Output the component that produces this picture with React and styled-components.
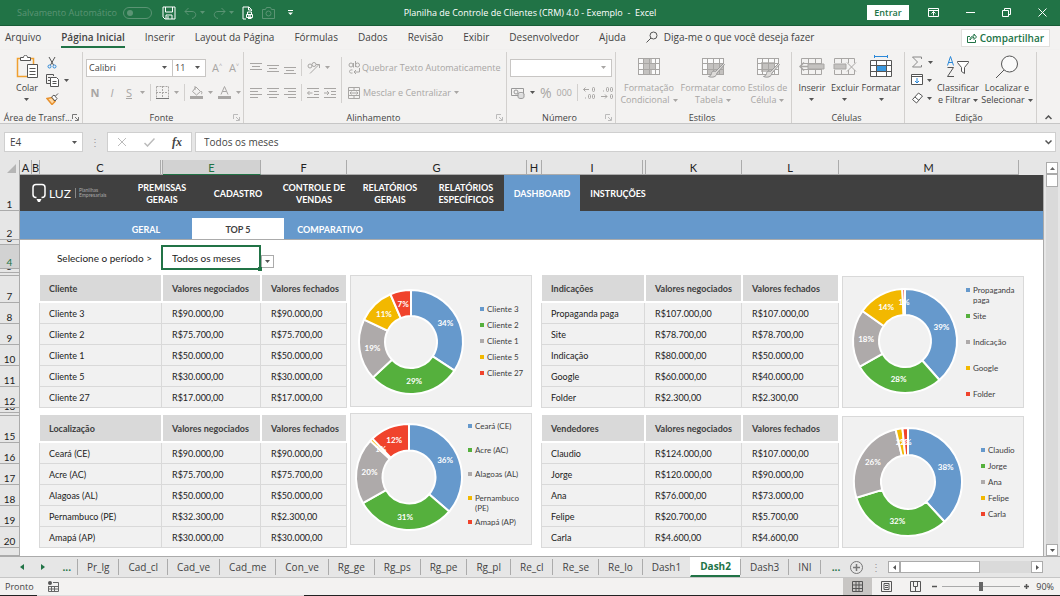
import React, { useState } from "react";
import styled, { createGlobalStyle } from "styled-components";

const UI_FONT = `"Open Sans", "Noto Sans", sans-serif`;
const CELL_FONT = `Lato, "Open Sans", sans-serif`;
const GREEN = "#217346";
const BLUE = "#6699cc";
const COLORS = ["#6699cc", "#55b03d", "#aeaaaa", "#f2b800", "#f0432c"];

const GlobalStyle = createGlobalStyle`
  * {
    box-sizing: border-box;
  }
  body {
    margin: 0;
    background: #f3f2f1;
    font-family: ${UI_FONT};
    font-size: 10px;
    color: #444;
    overflow: hidden;
  }
  button, input, select {
    font-family: inherit;
    font-size: inherit;
    color: inherit;
    margin: 0;
    padding: 0;
    border: none;
    background: none;
    border-radius: 0;
    outline: none;
  }
`;

const Svg = styled.svg`
  display: block;
  flex: none;
  fill: none;
  stroke: ${(p) => p.$color || "#555"};
  stroke-width: 1;
`;
const Icon = ({ w = 14, h = 14, color, children }) => (
  <Svg width={w} height={h} viewBox={`0 0 ${w} ${h}`} $color={color} aria-hidden="true">
    {children}
  </Svg>
);
const Caret = ({ color = "#555" }) => (
  <Icon w={5} h={3} color="none">
    <path d="M0 0h5L2.500 3z" fill={color} />
  </Icon>
);

/* ---------- title bar ---------- */
const TitleBar = styled.header`
  display: grid;
  grid-template-columns: 1fr auto 1fr;
  align-items: center;
  height: 26px;
  background: ${GREEN};
  border-bottom: 1px solid #185c37;
  color: #fff;
`;
const QuickAccess = styled.div`
  display: flex;
  align-items: center;
  gap: 8px;
  padding-left: 17px;
`;
const AutoSave = styled.label`
  display: flex;
  align-items: center;
  gap: 6px;
  margin-right: 2px;
  color: #5b9474;
  font-size: 9px;
`;
const Toggle = styled.input`
  appearance: none;
  display: flex;
  align-items: center;
  width: 29px;
  height: 12px;
  padding-left: 3px;
  border: 1px solid #5b9474;
  border-radius: 6px;
  &::before {
    content: "";
    width: 6px;
    height: 6px;
    border-radius: 50%;
    background: #5b9474;
  }
`;
const BareButton = styled.button`
  display: flex;
  align-items: center;
  justify-content: center;
  gap: ${(p) => p.$gap || 4}px;
`;
const Title = styled.h1`
  margin: 0;
  font-size: 9px;
  font-weight: 500;
  white-space: pre;
`;
const WindowControls = styled.div`
  display: flex;
  align-items: center;
  justify-content: flex-end;
  gap: 27px;
  padding-right: 13px;
`;
const SignIn = styled.button`
  width: 42px;
  height: 15px;
  margin-right: -8px;
  background: #fff;
  color: ${GREEN};
  font-size: 9px;
  font-weight: 600;
`;

/* ---------- ribbon ---------- */
const TabRow = styled.nav`
  display: flex;
  align-items: flex-end;
  height: 24px;
  padding: 0 10px 2px 5px;
  gap: 20px;
  background: #f3f2f1;
`;
const RibbonTab = styled.button`
  height: 20px;
  border-bottom: 2px solid ${(p) => (p.$active ? GREEN : "transparent")};
  font-weight: ${(p) => (p.$active ? 600 : 400)};
  white-space: nowrap;
`;
const TellMe = styled.button`
  display: flex;
  align-items: center;
  gap: 6px;
  flex: 1;
  height: 18px;
  margin-bottom: 2px;
`;
const Share = styled.button`
  display: flex;
  align-items: center;
  gap: 3px;
  height: 18px;
  margin-bottom: 1px;
  padding: 0 5px;
  border: 1px solid #e1dfdd;
  background: #fff;
  color: ${GREEN};
  font-weight: 600;
`;
const Ribbon = styled.div`
  display: flex;
  height: 74px;
  padding-top: 2px;
  background: #f3f2f1;
  border-bottom: 1px solid #c6c6c6;
  box-shadow: 0 2px 3px #ccc;
  font-size: 9px;
`;
const GroupBox = styled.section`
  display: flex;
  flex-direction: column;
  flex: none;
  width: ${(p) => p.$width}px;
  border-right: 1px solid #d2d0ce;
`;
const GroupBody = styled.div`
  display: flex;
  flex: 1;
  padding-left: ${(p) => p.$left || 0}px;
  gap: ${(p) => p.$gap || 0}px;
`;
const GroupLabel = styled.footer`
  display: grid;
  grid-template-columns: 1fr auto 1fr;
  align-items: center;
  height: 12px;
  padding-right: 3px;
  white-space: nowrap;
  svg {
    justify-self: end;
  }
`;
const Group = ({ width, left, gap, label, launcher, children }) => (
  <GroupBox $width={width}>
    <GroupBody $left={left} $gap={gap}>
      {children}
    </GroupBody>
    <GroupLabel>
      <i />
      {label}
      {launcher && (
        <Icon w={7} h={7} color={launcher}>
          <path d="M.5 5V.5H5M3 3l3 3M6.500 3v3.500H3" />
        </Icon>
      )}
    </GroupLabel>
  </GroupBox>
);
const BigButton = styled.button`
  display: flex;
  flex-direction: column;
  align-items: center;
  width: ${(p) => p.$width}px;
  padding-top: 3px;
  gap: 3px;
  line-height: 12px;
  white-space: nowrap;
  color: ${(p) => (p.$off ? "#a8a6a4" : "#444")};
`;
const BigIcon = styled.span`
  display: flex;
  align-items: center;
  justify-content: center;
  height: 24px;
`;
const BigText = styled.span`
  display: flex;
  flex-direction: column;
  align-items: center;
  min-height: 24px;
  > svg {
    margin-top: 4px;
  }
`;
const LastLine = styled.span`
  display: flex;
  align-items: center;
  gap: 3px;
`;
const Big = ({ width, off, icon, lines }) => (
  <BigButton $width={width} $off={off}>
    <BigIcon>{icon}</BigIcon>
    <BigText>
      {lines[0]}
      {lines[1] ? (
        <LastLine>
          {lines[1]}
          <Caret color={off ? "#a8a6a4" : "#555"} />
        </LastLine>
      ) : (
        <Caret />
      )}
    </BigText>
  </BigButton>
);
const SmallColumn = styled.div`
  display: flex;
  flex-direction: column;
  width: ${(p) => p.$width}px;
  padding-top: 1px;
  button {
    justify-content: flex-start;
    height: 18px;
  }
`;
const ToolRows = styled.div`
  display: flex;
  flex-direction: column;
  gap: 8px;
  padding-top: 7px;
`;
const ToolRow = styled.div`
  display: flex;
  align-items: center;
  height: 17px;
  gap: ${(p) => p.$gap || 5}px;
  padding-left: ${(p) => p.$left || 0}px;
  color: #a8a6a4;
  white-space: nowrap;
`;
const Divider = styled.span`
  width: 1px;
  height: 17px;
  background: #d2d0ce;
`;
const TallDivider = styled.span`
  width: 1px;
  height: 46px;
  margin: 5px 6px 0 5px;
  background: #d2d0ce;
`;
const Combo = styled.label`
  display: flex;
  align-items: center;
  width: ${(p) => p.$width}px;
  height: 18px;
  padding: 0 5px 0 2px;
  border: 1px solid #c8c6c4;
  background: #fff;
  color: #444;
  & + & {
    margin-left: -6px;
  }
  select {
    appearance: none;
    flex: 1;
    min-width: 0;
  }
`;
const Letter = styled.button`
  width: 12px;
  font-size: 11px;
  font-weight: ${(p) => (p.$bold ? 700 : 400)};
  font-style: ${(p) => (p.$italic ? "italic" : "normal")};
  text-decoration: ${(p) => (p.$underline ? "underline" : "none")};
`;
const Percent = styled.button`
  font-size: 14px;
`;
const Collapse = styled.button`
  display: flex;
  flex: 1;
  align-items: flex-end;
  justify-content: center;
  padding-bottom: 3px;
`;

const OFF = "#a8a6a4";
const Lines = ({ rows }) => (
  <Icon w={12} h={12} color={OFF}>
    {rows.map(([x, y, w]) => (
      <path key={y} d={`M${x} ${y}.5h${w}`} />
    ))}
  </Icon>
);
const TableGlyph = ({ shade, brush, dark }) => (
  <Icon w={24} h={22} color={dark || OFF}>
    <rect x="1.500" y="2.500" width="21" height="16" fill="#fafafa" />
    <path d={shade} fill={dark ? "#3b99e0" : "#c4c2c0"} stroke="none" />
    <path d="M1 7.500h22M1 13.500h22M6.500 2v17M12.500 2v17M18.500 2v17" />
    {brush && (
      <path
        d="M22.500 7.500l-8 8c-2-1-4 0-4 2-.5 2-1.500 2.500-3 3 4 1.500 8 .5 8.500-3.500l7.500-8.500z"
        fill="#dddbd9"
        stroke="#999"
      />
    )}
  </Icon>
);

/* ---------- formula bar ---------- */
const FormulaBar = styled.div`
  display: flex;
  align-items: center;
  height: 36px;
  padding: 0 4px;
  background: #e6e6e6;
`;
const BarBox = styled.div`
  display: flex;
  align-items: center;
  justify-content: space-between;
  width: ${(p) => p.$width}px;
  height: 20px;
  padding: 0 ${(p) => p.$pad || 5}px;
  border: 1px solid #cfcfcf;
  background: #fff;
  input {
    width: 50px;
  }
`;
const Dots = styled.span`
  width: 24px;
  text-align: center;
  color: #999;
`;
const FormulaInput = styled.label`
  display: flex;
  flex: 1;
  align-items: center;
  height: 20px;
  margin-left: 3px;
  padding: 0 3px 0 8px;
  border: 1px solid #cfcfcf;
  background: #fff;
  input {
    flex: 1;
  }
`;
const Fx = styled.i`
  font-family: "Liberation Serif", serif;
  font-size: 12px;
  font-weight: 700;
`;

/* ---------- sheet ---------- */
const SheetArea = styled.div`
  display: flex;
  background: #e6e6e6;
`;
const RowHeaders = styled.div`
  flex: none;
  width: 20px;
  border-right: 1px solid #ababab;
  font-family: ${CELL_FONT};
`;
const Corner = styled.div`
  display: flex;
  align-items: flex-end;
  justify-content: flex-end;
  height: 15px;
  padding: 0 3px 2px 0;
`;
const RowHeader = styled.div`
  display: flex;
  align-items: flex-end;
  justify-content: center;
  height: ${(p) => p.$height}px;
  border-bottom: 1px solid #ababab;
  overflow: hidden;
  line-height: 11px;
  background: ${(p) => (p.$active ? "#d2d2d2" : "#e6e6e6")};
  color: ${(p) => (p.$active ? GREEN : "#222")};
`;
const SheetMain = styled.main`
  flex: 1;
  min-width: 0;
  font-family: ${CELL_FONT};
`;
const ColumnHeaders = styled.div`
  display: flex;
  height: 15px;
  color: #222;
`;
const ColumnHeader = styled.div`
  flex: none;
  width: ${(p) => p.$width}px;
  border-right: 1px solid #ababab;
  border-bottom: 1px solid ${(p) => (p.$active ? GREEN : "#ababab")};
  background: ${(p) => (p.$active ? "#d2d2d2" : "#e6e6e6")};
  color: ${(p) => (p.$active ? GREEN : "#222")};
  font-size: 11px;
  line-height: 16px;
  text-align: center;
`;
const Page = styled.div`
  height: 381px;
  border-right: 1px solid #ababab;
  background: #fff;
`;
const MainNav = styled.nav`
  display: flex;
  height: 36px;
  background: #404040;
`;
const Logo = styled.div`
  display: flex;
  align-items: center;
  width: 104px;
  padding-left: 12px;
  gap: 3px;
  color: #fff;
`;
const LogoName = styled.b`
  font-size: 12px;
  font-weight: 400;
`;
const LogoTag = styled.span`
  margin-left: 1px;
  padding-left: 3px;
  border-left: 1px solid #888;
  color: #aaa;
  font-size: 5px;
  line-height: 5px;
`;
const MainLink = styled.a`
  display: flex;
  align-items: center;
  justify-content: center;
  width: 76px;
  padding-top: 2px;
  background: ${(p) => (p.$active ? BLUE : "transparent")};
  color: #fff;
  font-size: 9px;
  font-weight: 700;
  line-height: 12px;
  text-align: center;
  text-decoration: none;
`;
const SubNav = styled.nav`
  display: flex;
  align-items: flex-end;
  height: 29px;
  padding-left: 80px;
  background: ${BLUE};
  border-bottom: 1px solid #ababab;
`;
const SubLink = styled.a`
  width: 92px;
  height: 21px;
  background: ${(p) => (p.$active ? "#fff" : "transparent")};
  color: ${(p) => (p.$active ? "#404040" : "#fff")};
  font-size: 9px;
  font-weight: 700;
  line-height: 23px;
  text-align: center;
  text-decoration: none;
`;
const Period = styled.div`
  display: flex;
  align-items: center;
  height: 35px;
  color: #222;
  font-size: 10px;
  label {
    width: 141px;
    padding-right: 9px;
    text-align: right;
  }
`;
const PeriodCell = styled.div`
  position: relative;
  width: 100px;
  height: 25px;
  border: 2px solid ${GREEN};
  select {
    appearance: none;
    width: 100%;
    height: 100%;
    padding-left: 9px;
  }
  &::after {
    content: "";
    position: absolute;
    right: -3px;
    bottom: -3px;
    width: 4px;
    height: 4px;
    background: ${GREEN};
  }
`;
const DropButton = styled.button`
  display: flex;
  align-self: flex-end;
  align-items: center;
  justify-content: center;
  width: 13px;
  height: 13px;
  margin: 0 0 7px 0;
  border: 1px solid #ababab;
`;
const Blocks = styled.div`
  display: flex;
  padding-left: 19px;
`;
const TableColumn = styled.div`
  display: flex;
  flex-direction: column;
  gap: 7px;
`;
const ChartColumn = styled.div`
  display: flex;
  flex-direction: column;
  gap: ${(p) => p.$gap}px;
  margin: 0 9px 0 3px;
  padding-top: ${(p) => p.$top || 0}px;
`;
const DataTable = styled.table`
  table-layout: fixed;
  width: ${(p) => p.$width}px;
  border-spacing: 0;
  font-size: 9px;
  text-align: left;
  white-space: nowrap;
  th {
    height: 28px;
    padding: 1px 0 0 9px;
    border-left: 1px solid #fff;
    border-right: 1px solid #fff;
    border-bottom: 2px solid #fff;
    background: #d9d9d9;
    background-clip: padding-box;
    color: #404040;
  }
  td {
    height: 21px;
    padding: 0 0 0 10px;
    border-right: 1px solid #d9d9d9;
    border-bottom: 1px solid #d9d9d9;
    background: #f1f1f1;
    color: #222;
  }
  td:first-child {
    padding-left: 9px;
    border-left: 1px solid #d9d9d9;
  }
`;
const ChartPanel = styled.figure`
  display: flex;
  width: 182px;
  height: 132px;
  margin: 0;
  border: 1px solid #d9d9d9;
  background: #f1f1f1;
`;
const DonutSvg = styled.svg`
  flex: none;
  path {
    stroke: #fff;
    stroke-width: 2;
  }
  text {
    fill: #fff;
    font-size: 8px;
    font-weight: 700;
    text-anchor: middle;
  }
`;
const Legend = styled.ul`
  display: flex;
  flex-direction: column;
  width: 54px;
  margin: ${(p) => p.$top}px 0 0 ${(p) => p.$left}px;
  padding: 0;
  list-style: none;
  color: #404040;
  font-size: 8px;
  line-height: 10px;
`;
const LegendItem = styled.li`
  display: flex;
  flex: none;
  gap: 3px;
  height: ${(p) => p.$pitch}px;
  &::before {
    content: "";
    flex: none;
    width: 4px;
    height: 4px;
    margin-top: 3px;
    background: ${(p) => p.$color};
  }
`;

const period = "Todos os meses";
const table = (title, widths, rows, chart) => ({ title, widths, rows, chart });
const LEFT = [123, 99, 86];
const RIGHT = [104, 97, 97];
const LEFT_TABLES = [
  table(
    "Cliente",
    LEFT,
    [
      ["Cliente 3", 90000, 90000],
      ["Cliente 2", 75700, 75700],
      ["Cliente 1", 50000, 50000],
      ["Cliente 5", 30000, 30000],
      ["Cliente 27", 17000, 17000],
    ],
    { cx: 60, cy: 66, r: 52, top: 28, left: 9, pitch: 16 }
  ),
  table(
    "Localização",
    LEFT,
    [
      ["Ceará (CE)", 90000, 90000],
      ["Acre (AC)", 75700, 75700],
      ["Alagoas (AL)", 50000, 50000],
      ["Pernambuco (PE)", 32300, 2300],
      ["Amapá (AP)", 30000, 30000],
    ],
    { cx: 58, cy: 63, r: 53, top: 7, left: -3, pitch: 24 }
  ),
];
const RIGHT_TABLES = [
  table(
    "Indicações",
    RIGHT,
    [
      ["Propaganda paga", 107000, 107000],
      ["Site", 78700, 78700],
      ["Indicação", 80000, 50000],
      ["Google", 60000, 40000],
      ["Folder", 2300, 2300],
    ],
    { cx: 62, cy: 64, r: 52, top: 8, left: 3, pitch: 26 }
  ),
  table(
    "Vendedores",
    RIGHT,
    [
      ["Claudio", 124000, 107000],
      ["Jorge", 120000, 90000],
      ["Ana", 76000, 73000],
      ["Felipe", 20700, 5700],
      ["Carla", 4600, 4600],
    ],
    { cx: 65, cy: 65, r: 54, top: 28, left: 18, pitch: 16 }
  ),
];

const money = (value) => `R$${String(value).replace(/(\d)(\d{3})$/, "$1.$2")},00`;

// whole percentages that always add up to 100
const toPercents = (values) => {
  const total = values.reduce((a, b) => a + b, 0);
  const exact = values.map((value) => (value / total) * 100);
  const percents = exact.map(Math.floor);
  const missing = 100 - percents.reduce((a, b) => a + b, 0);
  exact
    .map((value, i) => [value - percents[i], i])
    .sort((a, b) => b[0] - a[0])
    .slice(0, missing)
    .forEach(([, i]) => (percents[i] += 1));
  return percents;
};

const Donut = ({ values, cx, cy, r }) => {
  const total = values.reduce((a, b) => a + b, 0);
  const percents = toPercents(values);
  const inner = r / 2;
  const point = (angle, radius) =>
    `${(cx + Math.sin(angle) * radius).toFixed(2)} ${(cy - Math.cos(angle) * radius).toFixed(2)}`;
  let start = 0;
  const slices = values.map((value) => {
    const end = start + (value / total) * Math.PI * 2;
    const slice = { start, end };
    start = end;
    return slice;
  });
  return (
    <DonutSvg width="120" height="130" viewBox="0 0 120 130">
      {slices.map((s, i) => (
        <path
          key={i}
          fill={COLORS[i]}
          d={`M${point(s.start, r)}A${r} ${r} 0 0 1 ${point(s.end, r)}L${point(s.end, inner)}A${inner} ${inner} 0 0 0 ${point(s.start, inner)}Z`}
        />
      ))}
      {slices.map((s, i) => {
        const [x, y] = point((s.start + s.end) / 2, r * 0.75).split(" ");
        return (
          <text key={i} x={x} y={Number(y) + 3}>
            {percents[i]}%
          </text>
        );
      })}
    </DonutSvg>
  );
};

const TopTable = ({ data }) => (
  <DataTable $width={data.widths.reduce((a, b) => a + b, 0)}>
    <colgroup>
      {data.widths.map((w, i) => (
        <col key={i} width={w} />
      ))}
    </colgroup>
    <thead>
      <tr>
        <th>{data.title}</th>
        <th>Valores negociados</th>
        <th>Valores fechados</th>
      </tr>
    </thead>
    <tbody>
      {data.rows.map(([name, negotiated, closed]) => (
        <tr key={name}>
          <td>{name}</td>
          <td>{money(negotiated)}</td>
          <td>{money(closed)}</td>
        </tr>
      ))}
    </tbody>
  </DataTable>
);

const TopChart = ({ data }) => {
  const { cx, cy, r, top, left, pitch } = data.chart;
  return (
    <ChartPanel>
      <Donut values={data.rows.map((row) => row[2])} cx={cx} cy={cy} r={r} />
      <Legend $top={top} $left={left}>
        {data.rows.map(([name], i) => (
          <LegendItem key={name} $pitch={pitch} $color={COLORS[i]}>
            {name}
          </LegendItem>
        ))}
      </Legend>
    </ChartPanel>
  );
};

/* ---------- scroll bars, sheet tabs, status ---------- */
const VerticalScroll = styled.div`
  display: flex;
  flex-direction: column;
  flex: none;
  width: 12px;
  margin: 2px 2px 0 2px;
  background: #dadada;
`;
const ScrollButton = styled.button`
  display: flex;
  align-items: center;
  justify-content: center;
  flex: none;
  width: 12px;
  height: 12px;
  border: 1px solid #ababab;
  background: #fff;
`;
const VerticalThumb = styled.div`
  width: 12px;
  height: 13px;
  border: 1px solid #ababab;
  background: #fff;
`;
const Spacer = styled.span`
  flex: 1;
`;
const SheetTabs = styled.nav`
  display: flex;
  align-items: center;
  height: 22px;
  padding-right: 17px;
  border-top: 1px solid #ababab;
  border-bottom: 1px solid #c6c6c6;
  background: #e6e6e6;
`;
const TabArrows = styled.div`
  display: flex;
  flex: none;
  justify-content: space-between;
  align-items: center;
  width: 77px;
  padding: 0 6px 0 20px;
  color: ${GREEN};
  font-weight: 700;
`;
const SheetTab = styled.button`
  flex: none;
  height: ${(p) => (p.$active ? 20 : 16)}px;
  padding: 0 9px;
  border-left: 1px solid ${(p) => (p.$active ? "transparent" : "#ababab")};
  border-bottom: ${(p) => (p.$active ? `2px solid ${GREEN}` : "none")};
  background: ${(p) => (p.$active ? "#fff" : "transparent")};
  color: ${(p) => (p.$active ? GREEN : "#444")};
  font-weight: ${(p) => (p.$active ? 700 : 400)};
`;
const MoreTabs = styled.span`
  width: 30px;
  border-left: 1px solid #ababab;
  color: ${GREEN};
  font-weight: 700;
  text-align: center;
`;
const HorizontalScroll = styled.div`
  display: flex;
  flex: none;
  width: 155px;
  background: #dadada;
`;
const HorizontalThumb = styled.div`
  width: 80px;
  border: 1px solid #ababab;
  background: #fff;
`;
const StatusBar = styled.footer`
  display: flex;
  align-items: center;
  height: 17px;
  padding: 0 6px 0 5px;
  background: #f3f2f1;
  font-size: 9px;
`;
const Ready = styled.span`
  margin-right: 14px;
`;
const ViewButton = styled.button`
  display: flex;
  align-items: center;
  justify-content: center;
  width: 29px;
  height: 17px;
  background: ${(p) => (p.$active ? "#c8c6c4" : "transparent")};
`;
const ZoomSlider = styled.input`
  appearance: none;
  width: 78px;
  height: 10px;
  margin: 0 3px;
  background: linear-gradient(#aaa, #aaa) center / 100% 1px no-repeat;
  &::-webkit-slider-thumb {
    appearance: none;
    width: 4px;
    height: 9px;
    background: #666;
  }
`;
const ZoomValue = styled.span`
  width: 24px;
  text-align: right;
`;
const TaskStrip = styled.div`
  height: 1px;
  background: linear-gradient(90deg, #222 37px, #ddd 37px, #ddd 304px, #222 304px);
`;

const RIBBON_TABS = [
  "Arquivo",
  "Página Inicial",
  "Inserir",
  "Layout da Página",
  "Fórmulas",
  "Dados",
  "Revisão",
  "Exibir",
  "Desenvolvedor",
  "Ajuda",
];
const COLUMNS = [
  ["A", 12],
  ["B", 8],
  ["C", 121],
  ["", 2],
  ["E", 98],
  ["F", 86],
  ["G", 180],
  ["H", 15],
  ["I", 101],
  ["", 3],
  ["K", 96],
  ["L", 97],
  ["M", 180],
];
const ROWS = [36, 29, 5, 24, 4, 3, 27, 21, 21, 21, 21, 21, 5, 3, 27, 21, 21, 21, 21, 21, 8];
const HIDDEN_NUMBERS = [6, 14, 21];
const MAIN_LINKS = [
  "PREMISSAS GERAIS",
  "CADASTRO",
  "CONTROLE DE VENDAS",
  "RELATÓRIOS GERAIS",
  "RELATÓRIOS ESPECÍFICOS",
  "DASHBOARD",
  "INSTRUÇÕES",
];
const SHEETS = [
  "Pr_lg",
  "Cad_cl",
  "Cad_ve",
  "Cad_me",
  "Con_ve",
  "Rg_ge",
  "Rg_ps",
  "Rg_pe",
  "Rg_pl",
  "Re_cl",
  "Re_se",
  "Re_lo",
  "Dash1",
  "Dash2",
  "Dash3",
  "INI",
];

const TitleBarComponent = () => (
  <TitleBar>
    <QuickAccess>
      <AutoSave>
        Salvamento Automático
        <Toggle type="checkbox" />
      </AutoSave>
      <BareButton aria-label="Salvar">
        <Icon w={14} h={14} color="#fff">
          <path d="M1 1h12v12H3l-2-2zM3.500 1v5h7V1M4 13V9h6v4M6 10v3" />
        </Icon>
      </BareButton>
      <BareButton aria-label="Desfazer" $gap={3}>
        <Icon w={13} h={12} color="#5b9474">
          <path d="M4.500 1L1 4.500 4.500 8M1 4.500h7c5 0 5 6 0 7" />
        </Icon>
        <Caret color="#5b9474" />
      </BareButton>
      <BareButton aria-label="Refazer" $gap={3}>
        <Icon w={13} h={12} color="#5b9474">
          <path d="M8.500 1L12 4.500 8.500 8M12 4.500H5c-5 0-5 6 0 7" />
        </Icon>
        <Caret color="#5b9474" />
      </BareButton>
      <BareButton aria-label="Visualizar impressão">
        <Icon w={12} h={14} color="#fff">
          <path d="M9.500 5V3.500L7 1H1v12h3M6.500 1v3h3M5.500 8V6h4v2M4.500 8.500h6v3h-6zM6 12.500h3.500" />
          <circle cx="7.500" cy="10" r="1" />
        </Icon>
      </BareButton>
      <BareButton aria-label="Câmera">
        <Icon w={13} h={12} color="#5b9474">
          <path d="M.5 2.500h3l1-2h4l1 2h3v9H.5z" />
          <circle cx="6.500" cy="6.500" r="2.500" />
        </Icon>
      </BareButton>
      <BareButton aria-label="Personalizar">
        <Icon w={13} h={6} color="#fff">
          <path d="M5 .5h5" />
          <path d="M5 2.500h5L7.500 5z" fill="#fff" stroke="none" />
        </Icon>
      </BareButton>
    </QuickAccess>
    <Title>{"Planilha de Controle de Clientes (CRM) 4.0 - Exemplo  -  Excel"}</Title>
    <WindowControls>
      <SignIn>Entrar</SignIn>
      <BareButton aria-label="Opções da faixa de opções">
        <Icon w={11} h={9} color="#fff">
          <path d="M.5.500h10v8H.5zM.5 2.500h10M5.500 7.500v-4M3.500 5.500l2-2 2 2" />
        </Icon>
      </BareButton>
      <BareButton aria-label="Minimizar">
        <Icon w={9} h={9} color="#fff">
          <path d="M0 4.500h9" />
        </Icon>
      </BareButton>
      <BareButton aria-label="Restaurar">
        <Icon w={9} h={9} color="#fff">
          <path d="M.5 2.500h6v6h-6zM2.500 2V.5h6v6H7" />
        </Icon>
      </BareButton>
      <BareButton aria-label="Fechar">
        <Icon w={9} h={9} color="#fff">
          <path d="M.5.500l8 8M8.500.500l-8 8" />
        </Icon>
      </BareButton>
    </WindowControls>
  </TitleBar>
);

const RibbonComponent = () => (
  <>
    <TabRow>
      {RIBBON_TABS.map((name) => (
        <RibbonTab key={name} $active={name === "Página Inicial"}>
          {name}
        </RibbonTab>
      ))}
      <TellMe>
        <Icon w={12} h={12} color="#555">
          <circle cx="7.500" cy="4.500" r="3.500" />
          <path d="M5 7L.5 11.500" />
        </Icon>
        Diga-me o que você deseja fazer
      </TellMe>
      <Share>
        <Icon w={10} h={10} color={GREEN}>
          <path d="M3 3.500H.5v6h8V7M3 7c0-2.500 1.500-4 4-4V1l2.500 3L7 6.500v-2C5 4.500 4 5.500 3 7z" />
        </Icon>
        Compartilhar
      </Share>
    </TabRow>
    <Ribbon>
      <Group width={83} left={12} gap={4} label="Área de Transf..." launcher="#777">
        <Big
          width={30}
          lines={["Colar"]}
          icon={
            <Icon w={24} h={24} color="#555">
              <path d="M5 3.500H2.500v18H12M16 3.500h2.500V9" stroke="#f0a030" strokeWidth="1.500" />
              <path d="M5.500 5.500v-3h3c0-3 4-3 4 0h3v3z" fill="#fff" />
              <path d="M12.500 9.500h10v13h-10zM14.500 13.500h6M14.500 16.500h6M14.500 19.500h6" fill="#fff" />
            </Icon>
          }
        />
        <SmallColumn $width={30}>
          <BareButton aria-label="Recortar">
            <Icon w={12} h={13}>
              <path d="M3 1l4.500 8M9 1L4.500 9" />
              <circle cx="3.500" cy="10.500" r="1.500" stroke="#2b88d8" />
              <circle cx="8.500" cy="10.500" r="1.500" stroke="#2b88d8" />
            </Icon>
          </BareButton>
          <BareButton aria-label="Copiar">
            <Icon w={14} h={13}>
              <path d="M4 9.500H.5v-9h7V2M2 3.500h2M2 6.500h2" />
              <path d="M4.500 3.500h6l2 2v7h-8zM6.500 7.500h4M6.500 9.500h4" fill="#fff" />
            </Icon>
            <Caret />
          </BareButton>
          <BareButton aria-label="Pincel de formatação">
            <Icon w={13} h={13}>
              <path d="M1 6.500l5-1 3 4-3 3z" fill="#fbd9a8" stroke="#e8912d" strokeWidth="1.500" />
              <path d="M5.500 5L8 3l3 3.500L9 9zM9.500 4L12 1.500" fill="#fff" />
            </Icon>
          </BareButton>
        </SmallColumn>
      </Group>

      <Group width={161} left={3} label="Fonte" launcher="#bbb">
        <ToolRows>
          <ToolRow>
            <Combo $width={87}>
              <select aria-label="Fonte">
                <option>Calibri</option>
              </select>
              <Caret />
            </Combo>
            <Combo $width={34}>
              <select aria-label="Tamanho">
                <option>11</option>
              </select>
              <Caret />
            </Combo>
            <Letter>A˄</Letter>
            <Letter>A˅</Letter>
          </ToolRow>
          <ToolRow $left={3}>
            <Letter $bold>N</Letter>
            <Letter $italic>I</Letter>
            <Letter $underline>S</Letter>
            <Caret color={OFF} />
            <Divider />
            <Icon w={13} h={13} color={OFF}>
              <path d="M.5.500h12v12M.5.500v12M6.500 0v12M0 6.500h12" strokeDasharray="2 1" />
              <path d="M0 12.500h13" stroke="#777" />
            </Icon>
            <Caret color={OFF} />
            <Divider />
            <Icon w={13} h={13} color={OFF}>
              <path d="M6 1l4.500 4.500-4 3.500-4-3.500zM5 0v4M11 5c1.500 1 1 3 0 3" />
              <path d="M0 10h13v3H0z" fill={OFF} stroke="none" />
            </Icon>
            <Caret color={OFF} />
            <Icon w={13} h={13} color={OFF}>
              <path d="M3 8.500L6.500.500l3.500 8M4.500 5.500h4" />
              <path d="M0 10h13v3H0z" fill={OFF} stroke="none" />
            </Icon>
            <Caret color={OFF} />
          </ToolRow>
        </ToolRows>
      </Group>

      <Group width={263} left={6} label="Alinhamento" launcher="#bbb">
        <ToolRows>
          <ToolRow>
            <Lines rows={[[0, 1, 12], [2, 4, 8], [0, 7, 12]]} />
            <Lines rows={[[0, 3, 12], [2, 6, 8], [0, 9, 12]]} />
            <Lines rows={[[0, 5, 12], [2, 8, 8], [0, 11, 12]]} />
            <Divider />
            <Icon w={13} h={13} color={OFF}>
              <path d="M3 12.500l9-9M12.500 7V3.500H9" />
              <circle cx="3" cy="5" r="2" />
              <circle cx="7" cy="3.500" r="2" />
            </Icon>
            <Caret color={OFF} />
          </ToolRow>
          <ToolRow>
            <Lines rows={[[0, 1, 12], [0, 4, 8], [0, 7, 12], [0, 10, 8]]} />
            <Lines rows={[[0, 1, 12], [2, 4, 8], [0, 7, 12], [2, 10, 8]]} />
            <Lines rows={[[0, 1, 12], [4, 4, 8], [0, 7, 12], [4, 10, 8]]} />
            <Divider />
            <Icon w={12} h={12} color={OFF}>
              <path d="M0 1.500h12M7 4.500h5M7 7.500h5M0 10.500h12M5.500 6H.5M2.500 4l-2 2 2 2" />
            </Icon>
            <Icon w={12} h={12} color={OFF}>
              <path d="M0 1.500h12M7 4.500h5M7 7.500h5M0 10.500h12M0 6h5M3 4l2 2-2 2" />
            </Icon>
          </ToolRow>
        </ToolRows>
        <TallDivider />
        <ToolRows>
          <ToolRow $gap={2}>
            <Icon w={12} h={13} color={OFF}>
              <circle cx="3" cy="4" r="2" />
              <path d="M5.500 2v4.500M7.500 0v6" />
              <circle cx="9.500" cy="4" r="2" />
              <path d="M4.500 9c-4-1-4 4 0 3M11.500 7v4h-5M8 9l-2 2 2 2" />
            </Icon>
            Quebrar Texto Automaticamente
          </ToolRow>
          <ToolRow $gap={3}>
            <Icon w={12} h={12} color={OFF}>
              <path d="M.5.500h11v11H.5zM.5 3.500h11M.5 8.500h11M6 0v3M6 9v3M2 6h8M3.500 4.500L2 6l1.500 1.500M8.500 4.500L10 6 8.500 7.500" />
            </Icon>
            Mesclar e Centralizar
            <Caret color={OFF} />
          </ToolRow>
        </ToolRows>
      </Group>

      <Group width={109} left={3} label="Número" launcher="#bbb">
        <ToolRows>
          <ToolRow>
            <Combo $width={102}>
              <select aria-label="Formato de número" />
              <Caret color={OFF} />
            </Combo>
          </ToolRow>
          <ToolRow>
            <Icon w={15} h={12} color="#999">
              <path d="M1.500 1.500h12v7h-12z" />
              <circle cx="6" cy="5" r="2" />
              <ellipse cx="11" cy="7" rx="3" ry="1.500" fill="#eee" />
              <path d="M8 7v3c0 2 6 2 6 0V7" fill="#ddd" />
            </Icon>
            <Caret />
            <Percent>%</Percent>
            <span>000</span>
            <Divider />
            <Icon w={13} h={13} color={OFF}>
              <path d="M6 3.500H.5M2.500 1.500l-2 2 2 2M2.500 11.500v1" />
              <rect x="9.500" y="1.500" width="2" height="4" rx="1" />
              <rect x="5.500" y="8.500" width="2" height="4" rx="1" />
              <rect x="9.500" y="8.500" width="2" height="4" rx="1" />
            </Icon>
            <Icon w={13} h={13} color={OFF}>
              <path d="M0 10.500h6M4 8.500l2 2-2 2M2.500 4.500v1" />
              <rect x="5.500" y="1.500" width="2" height="4" rx="1" />
              <rect x="9.500" y="1.500" width="2" height="4" rx="1" />
              <rect x="9.500" y="8.500" width="2" height="4" rx="1" />
            </Icon>
          </ToolRow>
        </ToolRows>
      </Group>

      <Group width={176} left={1} label="Estilos">
        <Big
          width={64}
          off
          lines={["Formatação", "Condicional"]}
          icon={<TableGlyph shade="M7 3h8v5H7zM7 8h11v5H7zM7 13h8v5H7z" />}
        />
        <Big
          width={64}
          off
          lines={["Formatar como", "Tabela"]}
          icon={<TableGlyph brush shade="M7 8h15v10H7z" />}
        />
        <Big
          width={45}
          off
          lines={["Estilos de", "Célula"]}
          icon={<TableGlyph brush shade="M5 6h14v10H5z" />}
        />
      </Group>

      <Group width={113} left={3} label="Células">
        <Big
          width={34}
          lines={["Inserir"]}
          icon={
            <Icon w={26} h={22} color={OFF}>
              <path d="M2.500 2.500h20v16h-20zM9.500 2v17M16.500 2v17M2 7.500h21M2 13.500h21" />
              <path d="M9 8h16v5H9z" fill="#c4c2c0" />
              <path d="M9 10.500H1M5 6.500l-4 4 4 4" strokeWidth="1.500" />
            </Icon>
          }
        />
        <Big
          width={32}
          lines={["Excluir"]}
          icon={
            <Icon w={24} h={22} color={OFF}>
              <path d="M1.500 7V2.500h20V7M1.500 14v4.500h20V14M8.500 2v5M15.500 2v5M8.500 14v5M15.500 14v5" />
              <path d="M1 8h12v5H1z" fill="#c4c2c0" />
              <path d="M14 6.500l9 9M23 6.500l-9 9" />
            </Icon>
          }
        />
        <Big
          width={40}
          lines={["Formatar"]}
          icon={
            <Icon w={24} h={24} color="#555">
              <path d="M1.500 5.500h21v16h-21z" fill="#fff" />
              <path d="M7 11h11v6H7z" fill="#3b99e0" stroke="none" />
              <path d="M7.500 5v17M17.500 5v17M1 10.500h22M1 16.500h22" />
              <path d="M6 1.500h12M5.500 0v3M18.500 0v3" stroke="#2b88d8" />
            </Icon>
          }
        />
      </Group>

      <Group width={132} left={6} label="Edição">
        <SmallColumn $width={24}>
          <BareButton aria-label="Soma" $gap={5}>
            <Icon w={12} h={12} color="#888">
              <path d="M10.500 3V1H1.500l5 5-5 5h9V9" />
            </Icon>
            <Caret />
          </BareButton>
          <BareButton aria-label="Preencher" $gap={4}>
            <Icon w={12} h={12}>
              <path d="M.5.500h11v10H.5zM.5 2.500h11" fill="#fff" />
              <path d="M6 4v5M4 7l2 2 2-2" stroke="#2b88d8" />
            </Icon>
            <Caret />
          </BareButton>
          <BareButton aria-label="Limpar" $gap={4}>
            <Icon w={12} h={12}>
              <path d="M7.500 1l4 3-6 7-4-3.500zM4 5l4 3.500" fill="#fff" />
            </Icon>
            <Caret />
          </BareButton>
        </SmallColumn>
        <Big
          width={46}
          lines={["Classificar", "e Filtrar"]}
          icon={
            <Icon w={24} h={24}>
              <path d="M1.500 10.500l3-9 3 9M2.500 7.500h4" stroke="#2b88d8" />
              <path d="M1.500 12.500h6l-6 9h6.500" />
              <path d="M11.500 6.500h11v1l-4 5v6l-3-2v-4l-4-5z" fill="#fff" />
            </Icon>
          }
        />
        <Big
          width={52}
          lines={["Localizar e", "Selecionar"]}
          icon={
            <Icon w={24} h={24}>
              <circle cx="14.500" cy="9" r="8" fill="#fafafa" />
              <path d="M9 15l-8 8" />
            </Icon>
          }
        />
      </Group>
      <Collapse aria-label="Recolher">
        <Icon w={7} h={5}>
          <path d="M.5 4l3-3 3 3" strokeWidth="1.500" />
        </Icon>
      </Collapse>
    </Ribbon>
  </>
);

const FormulaBarComponent = ({ value }) => (
  <FormulaBar>
    <BarBox $width={79}>
      <input aria-label="Caixa de nome" defaultValue="E4" />
      <Caret />
    </BarBox>
    <Dots>⋮</Dots>
    <BarBox $width={85} $pad={9}>
      <Icon w={10} h={10} color="#bbb">
        <path d="M1 1l8 8M9 1L1 9" />
      </Icon>
      <Icon w={11} h={9} color="#bbb">
        <path d="M.5 5l3 3 7-7.500" strokeWidth="1.500" />
      </Icon>
      <Fx>fx</Fx>
    </BarBox>
    <FormulaInput>
      <input aria-label="Barra de fórmulas" value={value} readOnly />
      <Icon w={7} h={5}>
        <path d="M.5.500l3 3 3-3" strokeWidth="1.500" />
      </Icon>
    </FormulaInput>
  </FormulaBar>
);

const AppComponent = () => {
  const [selected, setSelected] = useState(period);

  return (
    <>
      <GlobalStyle />
      <TitleBarComponent />
      <RibbonComponent />
      <FormulaBarComponent value={selected} />
      <SheetArea>
        <RowHeaders>
          <Corner>
            <Icon w={9} h={9} color="none">
              <path d="M9 0v9H0z" fill="#b5b5b5" />
            </Icon>
          </Corner>
          {ROWS.map((height, i) => (
            <RowHeader key={i} $height={height} $active={i === 3}>
              {!HIDDEN_NUMBERS.includes(i + 1) && i + 1}
            </RowHeader>
          ))}
        </RowHeaders>
        <SheetMain>
          <ColumnHeaders>
            {COLUMNS.map(([name, width], i) => (
              <ColumnHeader key={i} $width={width} $active={name === "E"}>
                {name}
              </ColumnHeader>
            ))}
          </ColumnHeaders>
          <Page>
            <MainNav>
              <Logo>
                <Icon w={14} h={20} color="#fff">
                  <path
                    d="M4.500 14.500H4c-2 0-3-1-3-3V4.500c0-2 1-3 3-3h6c2 0 3 1 3 3v7c0 2-1 3-3 3h-.5"
                    strokeWidth="1.500"
                  />
                  <path d="M4.500 16h5L8 19H6z" fill="#fff" stroke="none" />
                </Icon>
                <LogoName>LUZ</LogoName>
                <LogoTag>
                  Planilhas
                  <br />
                  Empresariais
                </LogoTag>
              </Logo>
              {MAIN_LINKS.map((name) => (
                <MainLink key={name} href="#" $active={name === "DASHBOARD"}>
                  {name}
                </MainLink>
              ))}
            </MainNav>
            <SubNav>
              <SubLink href="#">GERAL</SubLink>
              <SubLink href="#" $active>
                TOP 5
              </SubLink>
              <SubLink href="#">COMPARATIVO</SubLink>
            </SubNav>
            <Period>
              <label htmlFor="period">Selecione o período &gt;</label>
              <PeriodCell>
                <select id="period" value={selected} onChange={(e) => setSelected(e.target.value)}>
                  <option>{period}</option>
                </select>
              </PeriodCell>
              <DropButton aria-label="Abrir lista">
                <Caret />
              </DropButton>
            </Period>
            <Blocks>
              <TableColumn>
                {LEFT_TABLES.map((data) => (
                  <TopTable key={data.title} data={data} />
                ))}
              </TableColumn>
              <ChartColumn $gap={6}>
                {LEFT_TABLES.map((data) => (
                  <TopChart key={data.title} data={data} />
                ))}
              </ChartColumn>
              <TableColumn>
                {RIGHT_TABLES.map((data) => (
                  <TopTable key={data.title} data={data} />
                ))}
              </TableColumn>
              <ChartColumn $gap={8} $top={1}>
                {RIGHT_TABLES.map((data) => (
                  <TopChart key={data.title} data={data} />
                ))}
              </ChartColumn>
            </Blocks>
          </Page>
        </SheetMain>
        <VerticalScroll>
          <ScrollButton aria-label="Para cima">
            <Icon w={5} h={3} color="none">
              <path d="M0 3h5L2.500 0z" fill="#666" />
            </Icon>
          </ScrollButton>
          <VerticalThumb />
          <Spacer />
          <ScrollButton aria-label="Para baixo">
            <Caret />
          </ScrollButton>
        </VerticalScroll>
      </SheetArea>
      <SheetTabs>
        <TabArrows>
          <Icon w={4} h={6} color="none">
            <path d="M4 0v6L0 3z" fill={GREEN} />
          </Icon>
          <Icon w={4} h={6} color="none">
            <path d="M0 0v6l4-3z" fill={GREEN} />
          </Icon>
          <span>...</span>
        </TabArrows>
        {SHEETS.map((name) => (
          <SheetTab key={name} $active={name === "Dash2"}>
            {name}
          </SheetTab>
        ))}
        <MoreTabs>...</MoreTabs>
        <BareButton aria-label="Nova planilha">
          <Icon w={13} h={13} color="#777">
            <circle cx="6.500" cy="6.500" r="6" />
            <path d="M6.500 3v7M3 6.500h7" strokeWidth="1.500" />
          </Icon>
        </BareButton>
        <Spacer />
        <Dots>⋮</Dots>
        <HorizontalScroll>
          <ScrollButton aria-label="Para a esquerda">
            <Icon w={3} h={5} color="none">
              <path d="M3 0v5L0 2.500z" fill="#555" />
            </Icon>
          </ScrollButton>
          <HorizontalThumb />
          <Spacer />
          <ScrollButton aria-label="Para a direita">
            <Icon w={3} h={5} color="none">
              <path d="M0 0v5l3-2.500z" fill="#555" />
            </Icon>
          </ScrollButton>
        </HorizontalScroll>
      </SheetTabs>
      <StatusBar>
        <Ready>Pronto</Ready>
        <Icon w={11} h={11} color="#666">
          <path d="M5 1.500h5.500v9H.5V5M1 5.500h9.500M3.500 5v5M6.500 5v5M.5 8h10" />
          <circle cx="2" cy="2" r="2" fill="#555" stroke="none" />
        </Icon>
        <Spacer />
        <ViewButton $active aria-label="Normal">
          <Icon w={11} h={11}>
            <path d="M.5.500h10v10H.5zM.5 4h10M.5 7.500h10M4 .5v10M7 .5v10" />
          </Icon>
        </ViewButton>
        <ViewButton aria-label="Layout da página">
          <Icon w={11} h={11}>
            <path d="M.5.500h10v10H.5zM3 2.500h5v6H3zM4 4.500h3M4 6.500h3" />
          </Icon>
        </ViewButton>
        <ViewButton aria-label="Quebra de página">
          <Icon w={11} h={11}>
            <path d="M.5.500h10v10H.5zM3.500.500v5h4v-5M5.500 6v4" />
          </Icon>
        </ViewButton>
        <BareButton aria-label="Reduzir">
          <Icon w={9} h={9}>
            <path d="M2 4.500h5" strokeWidth="1.500" />
          </Icon>
        </BareButton>
        <ZoomSlider type="range" aria-label="Zoom" min="10" max="170" defaultValue="90" />
        <BareButton aria-label="Ampliar">
          <Icon w={7} h={9}>
            <path d="M1 4.500h5M3.500 2v5" strokeWidth="1.500" />
          </Icon>
        </BareButton>
        <ZoomValue>90%</ZoomValue>
      </StatusBar>
      <TaskStrip />
    </>
  );
};

export default AppComponent;
